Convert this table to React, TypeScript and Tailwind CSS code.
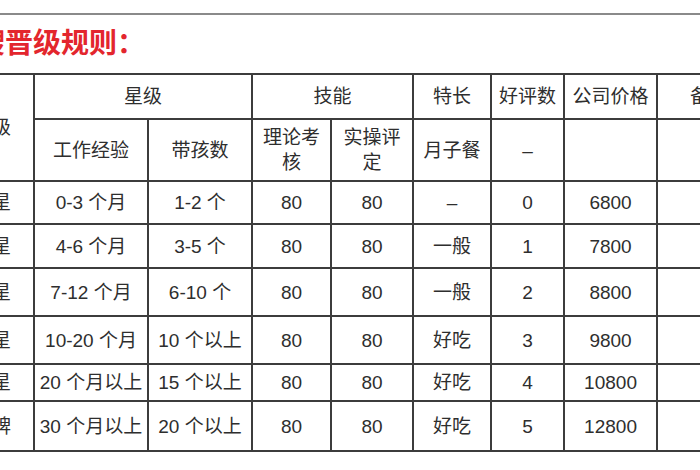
import React from 'react';

const colWidths = [84, 114, 104, 79, 82, 78, 73, 93, 104];

const rows = [
  { level: '一星', exp: '0-3 个月', kids: '1-2 个', theory: '80', practice: '80', skill: '–', praise: '0', price: '6800', h: 'h-[43px]' },
  { level: '二星', exp: '4-6 个月', kids: '3-5 个', theory: '80', practice: '80', skill: '一般', praise: '1', price: '7800', h: 'h-[44px]' },
  { level: '三星', exp: '7-12 个月', kids: '6-10 个', theory: '80', practice: '80', skill: '一般', praise: '2', price: '8800', h: 'h-[48px]' },
  { level: '四星', exp: '10-20 个月', kids: '10 个以上', theory: '80', practice: '80', skill: '好吃', praise: '3', price: '9800', h: 'h-[48px]' },
  { level: '五星', exp: '20 个月以上', kids: '15 个以上', theory: '80', practice: '80', skill: '好吃', praise: '4', price: '10800', h: 'h-[37px]' },
  { level: '金牌', exp: '30 个月以上', kids: '20 个以上', theory: '80', practice: '80', skill: '好吃', praise: '5', price: '12800', h: 'h-[50px]' },
];

const cell = 'border-2 border-[#3c3c3c] text-center align-middle px-1 py-0 leading-[25px] font-normal';

const App: React.FC = () => {
  return (
    <div className="w-[700px] h-[470px] overflow-hidden bg-white text-[#2e2e2e] font-['Liberation_Sans','Noto_Sans_CJK_SC',sans-serif]">
      <div className="h-[13px]" />
      <div className="border-t-2 border-[#8a8a8a]" />

      {/* 标题 */}
      <div className="h-[58px] flex items-center pb-[6px]">
        <h1 className="ml-[-51px] whitespace-nowrap text-[28px] leading-none font-bold text-[#e3262d] font-['Noto_Sans_CJK_SC',sans-serif]">
          月嫂晋级规则：
        </h1>
      </div>

      <table className="ml-[-51px] w-[811px] table-fixed border-collapse text-[19px]">
        <colgroup>
          {colWidths.map((w, i) => (
            <col key={i} style={{ width: w }} />
          ))}
        </colgroup>
        <thead>
          <tr className="h-[45px]">
            <th rowSpan={2} className={cell}>等级</th>
            <th colSpan={2} className={cell}>星级</th>
            <th colSpan={2} className={cell}>技能</th>
            <th className={cell}>特长</th>
            <th className={`${cell} px-0`}>好评数</th>
            <th className={cell}>公司价格</th>
            <th className={cell}>备注</th>
          </tr>
          <tr className="h-[62px]">
            <th className={cell}>工作经验</th>
            <th className={cell}>带孩数</th>
            <th className={cell}>理论考核</th>
            <th className={cell}>实操评定</th>
            <th className={cell}>月子餐</th>
            <th className={cell}>–</th>
            <th className={cell}></th>
            <th className={cell}></th>
          </tr>
        </thead>
        <tbody>
          {rows.map((r) => (
            <tr key={r.level} className={r.h}>
              <td className={cell}>{r.level}</td>
              <td className={`${cell} px-0 whitespace-nowrap`}>{r.exp}</td>
              <td className={`${cell} px-0 whitespace-nowrap`}>{r.kids}</td>
              <td className={cell}>{r.theory}</td>
              <td className={cell}>{r.practice}</td>
              <td className={cell}>{r.skill}</td>
              <td className={cell}>{r.praise}</td>
              <td className={cell}>{r.price}</td>
              <td className={cell}></td>
            </tr>
          ))}
        </tbody>
      </table>
    </div>
  );
};

export default App;
